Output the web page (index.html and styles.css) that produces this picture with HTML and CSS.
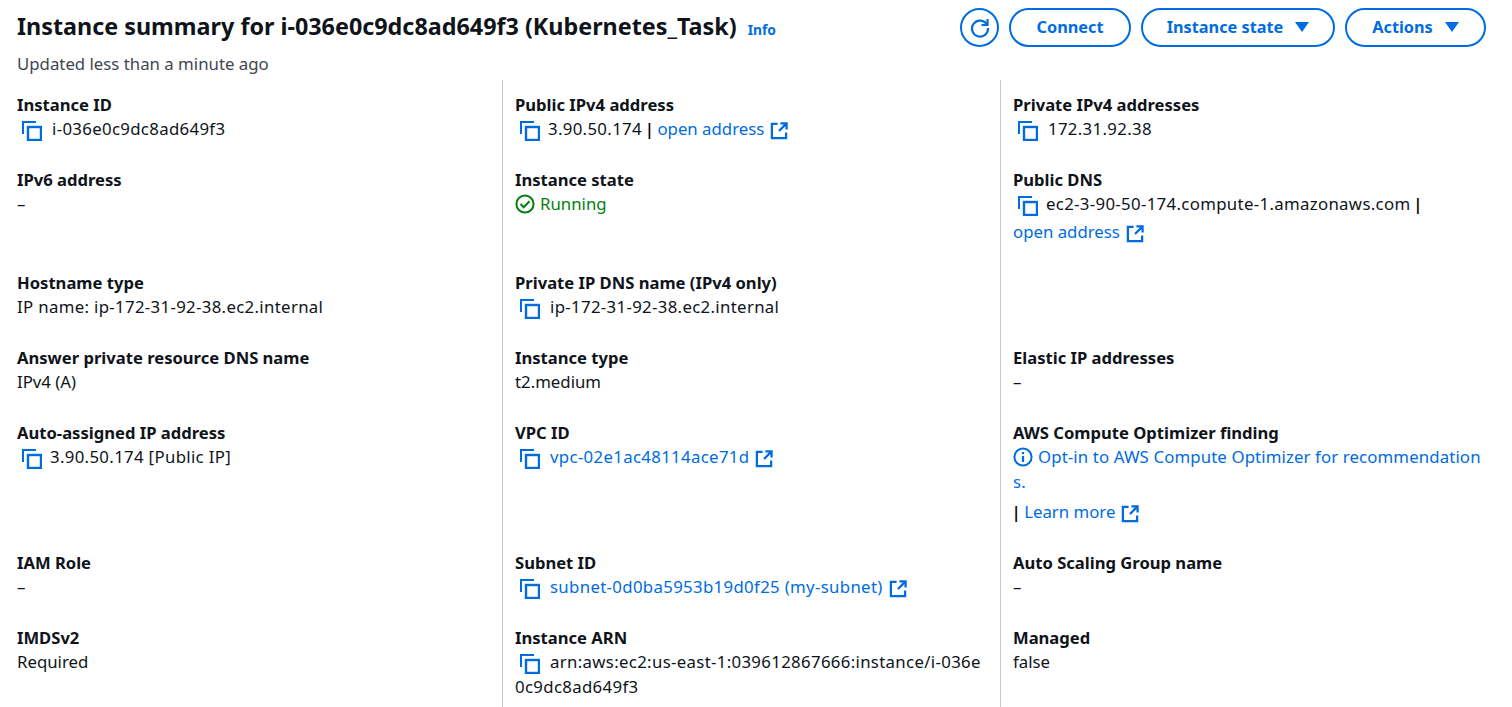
FILE: index.html
```html
<!DOCTYPE html>
<html lang="en">
<head>
<meta charset="utf-8">
<title>Instance summary</title>
<link rel="stylesheet" href="styles.css">
</head>
<body>
<svg class="defs" width="0" height="0" aria-hidden="true">
  <symbol id="copy" viewBox="0 0 20 20"><path d="M1 13V1h13" fill="none" stroke="currentColor" stroke-width="2"/><rect x="6" y="6" width="13" height="13" fill="none" stroke="currentColor" stroke-width="2.4"/></symbol>
  <symbol id="ext" viewBox="0 0 19 19"><path d="M8 2H2v15h15v-6" fill="none" stroke="currentColor" stroke-width="2.4"/><path d="M11 1.500h6.500V8M17 2l-7.500 7.500" fill="none" stroke="currentColor" stroke-width="2.400"/></symbol>
</svg>
<header class="header">
  <div class="titles">
    <div class="title-row"><h1 class="title">Instance summary for i-036e0c9dc8ad649f3 (Kubernetes_Task)</h1><a class="info">Info</a></div>
    <p class="updated">Updated less than a minute ago</p>
  </div>
  <div class="actions">
    <button class="btn btn-icon" aria-label="Refresh">
      <svg width="20" height="20" viewBox="0 0 20 20"><path d="M16.900 6.500A8 8 0 1 0 18 10" fill="none" stroke="currentColor" stroke-width="2.200"/><path d="M17.500 1v6h-6" fill="none" stroke="currentColor" stroke-width="2.200"/></svg>
    </button>
    <button class="btn btn-connect">Connect</button>
    <button class="btn btn-state">Instance state<span class="caret"></span></button>
    <button class="btn btn-actions">Actions<span class="caret"></span></button>
  </div>
</header>
<main class="grid">
  <section class="cell"><div class="label">Instance ID</div><div class="value"><svg class="ic-copy"><use href="#copy"/></svg><span class="id">i-036e0c9dc8ad649f3</span></div></section>
  <section class="cell"><div class="label">Public IPv4 address</div><div class="value"><svg class="ic-copy tight"><use href="#copy"/></svg><span class="id">3.90.50.174</span> <span class="sep">|</span> <a class="link">open address<svg class="ic-ext"><use href="#ext"/></svg></a></div></section>
  <section class="cell"><div class="label">Private IPv4 addresses</div><div class="value"><svg class="ic-copy"><use href="#copy"/></svg><span class="id">172.31.92.38</span></div></section>

  <section class="cell"><div class="label">IPv6 address</div><div class="value">–</div></section>
  <section class="cell"><div class="label">Instance state</div><div class="value running"><svg class="ic-status" viewBox="0 0 20 20"><circle cx="10" cy="10" r="8.600" fill="none" stroke="currentColor" stroke-width="2"/><path d="M5.500 10l3.200 3.200 5.800-6" fill="none" stroke="currentColor" stroke-width="2"/></svg>Running</div></section>
  <section class="cell"><div class="label">Public DNS</div><div class="value"><svg class="ic-copy tight"><use href="#copy"/></svg><span class="id">ec2-3-90-50-174.compute-1.amazonaws.com</span> <span class="sep">|</span></div><div class="value next-28"><a class="link">open address<svg class="ic-ext"><use href="#ext"/></svg></a></div></section>

  <section class="cell"><div class="label">Hostname type</div><div class="value"><span class="id">IP name: ip-172-31-92-38.ec2.internal</span></div></section>
  <section class="cell"><div class="label">Private IP DNS name (IPv4 only)</div><div class="value"><svg class="ic-copy"><use href="#copy"/></svg><span class="id">ip-172-31-92-38.ec2.internal</span></div></section>
  <section class="cell"></section>

  <section class="cell"><div class="label">Answer private resource DNS name</div><div class="value">IPv4 (A)</div></section>
  <section class="cell"><div class="label">Instance type</div><div class="value">t2.medium</div></section>
  <section class="cell"><div class="label">Elastic IP addresses</div><div class="value">–</div></section>

  <section class="cell"><div class="label">Auto-assigned IP address</div><div class="value"><svg class="ic-copy tight"><use href="#copy"/></svg><span class="id">3.90.50.174 [Public IP]</span></div></section>
  <section class="cell"><div class="label">VPC ID</div><div class="value"><svg class="ic-copy"><use href="#copy"/></svg><a class="link"><span class="id">vpc-02e1ac48114ace71d</span><svg class="ic-ext"><use href="#ext"/></svg></a></div></section>
  <section class="cell"><div class="label">AWS Compute Optimizer finding</div><div class="value break opt"><a class="link"><svg class="ic-info" viewBox="0 0 20 20"><circle cx="10" cy="10" r="8.600" fill="none" stroke="currentColor" stroke-width="2"/><path d="M10 9v6" stroke="currentColor" stroke-width="2.200"/><path d="M10 5v2.200" stroke="currentColor" stroke-width="2.200"/></svg>Opt-in to AWS Compute Optimizer for recommendations.</a></div><div class="value next-30"><span class="sep">|</span> <a class="link">Learn more<svg class="ic-ext"><use href="#ext"/></svg></a></div></section>

  <section class="cell"><div class="label">IAM Role</div><div class="value">–</div></section>
  <section class="cell"><div class="label">Subnet ID</div><div class="value"><svg class="ic-copy"><use href="#copy"/></svg><a class="link"><span class="id">subnet-0d0ba5953b19d0f25 (my-subnet)</span><svg class="ic-ext"><use href="#ext"/></svg></a></div></section>
  <section class="cell"><div class="label">Auto Scaling Group name</div><div class="value">–</div></section>

  <section class="cell"><div class="label">IMDSv2</div><div class="value">Required</div></section>
  <section class="cell"><div class="label">Instance ARN</div><div class="value break"><svg class="ic-copy"><use href="#copy"/></svg><span class="id">arn:aws:ec2:us-east-1:039612867666:instance/i-036e0c9dc8ad649f3</span></div></section>
  <section class="cell"><div class="label">Managed</div><div class="value">false</div></section>
</main>
</body>
</html>
```
FILE: styles.css
```css
* { box-sizing: border-box; }
html, body { margin: 0; height: 707px; overflow: hidden; }
body { background: #fff; color: #0f141a; font-family: "Noto Sans", Inter, sans-serif; font-size: 16.800px; line-height: 25px; }
.defs { display: block; }

.header { display: flex; justify-content: space-between; height: 80px; padding: 8px 26px 0 17px; }
.title-row { display: flex; align-items: baseline; gap: 11px; }
.title { margin: 0; font-size: 23.330px; line-height: 36px; font-weight: 700; }
.info { color: #006ce0; font-size: 13.800px; font-weight: 700; }
.updated { margin: 8px 0 0; color: #424650; line-height: 24px; }

.actions { display: flex; align-items: flex-start; gap: 10px; }
.btn { display: inline-flex; align-items: center; justify-content: center; height: 39px; padding: 0 0 2px; border: 2px solid #006ce0; border-radius: 20px; background: #fff; color: #006ce0; font: 700 16.300px "Noto Sans", Inter, sans-serif; }
.btn-icon { width: 39px; padding: 0; }
.btn-connect { width: 122px; }
.btn-state { width: 194px; }
.btn-actions { width: 141px; }
.caret { width: 0; height: 0; margin-left: 12px; border: 7px solid transparent; border-top: 10px solid #006ce0; border-bottom: 0; }

.grid { display: grid; grid-template-columns: repeat(3, 498px); padding-left: 5px; min-height: 627px; }
.cell { padding: 12px 15px 13px 12px; border-right: 1px solid #c6c6cd; }
.cell:nth-child(3n) { border-right: 0; }
.label { font-weight: 700; font-size: 16.600px; }
.value { margin-top: -1px; padding-bottom: 1px; overflow-wrap: anywhere; }
.break { word-break: break-all; }
.opt { letter-spacing: 0.120px; }
.id { letter-spacing: 0.330px; }
.sep { margin: 0 -1px 0 -1.500px; font-weight: 600; color: #000; }
.next-28 { margin-top: 2px; }
.next-30 { margin-top: 4px; }
.running { color: #037f0c; }
.link { color: #006ce0; }
.ic-copy { display: inline-block; width: 20px; height: 20px; margin: -5px 10px -5px 5px; color: #006ce0; vertical-align: -1px; }
.ic-copy.tight { margin-right: 8px; }
.ic-ext { display: inline-block; width: 18px; height: 18px; margin: -5px 0 -5px 6px; vertical-align: 0; }
.ic-status, .ic-info { display: inline-block; width: 20px; height: 20px; margin: -5px 5px -5px 0; vertical-align: 1px; }
```
